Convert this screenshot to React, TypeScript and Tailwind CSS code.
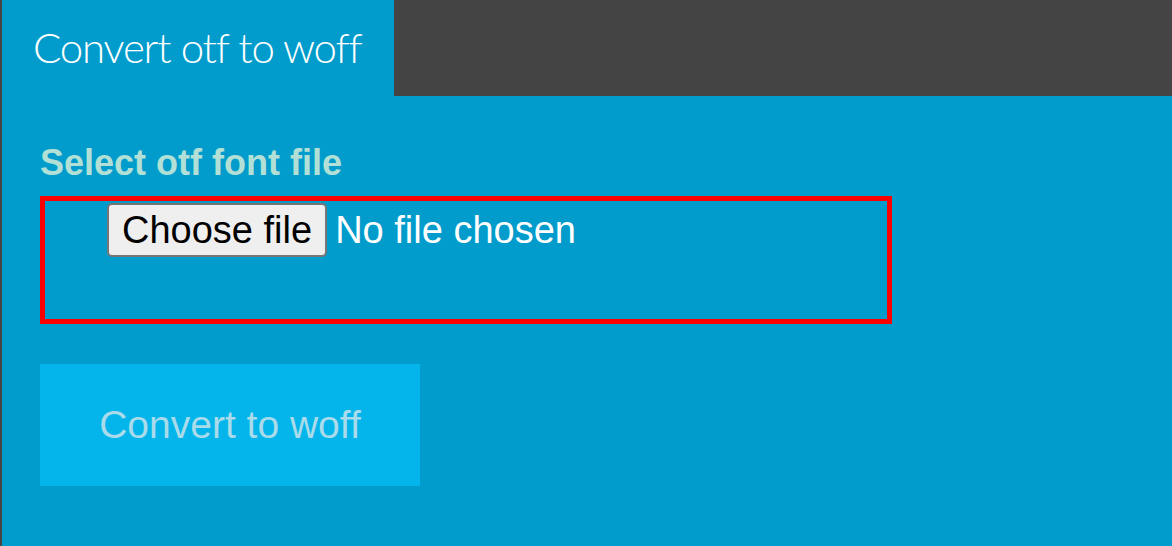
import React from "react";

const App: React.FC = () => {
  return (
    <div className="flex h-[546px] w-full flex-col bg-[#444444] pl-[2px]">
      <div className="flex h-[96px] shrink-0">
        <div className="flex w-[392px] items-center bg-[#019ccb] pl-[31px] pb-[2px]">
          <h1 className="font-['Lato','Open_Sans',sans-serif] text-[42px] font-light leading-none tracking-[-1.2px] text-white">
            Convert otf to woff
          </h1>
        </div>
      </div>

      <div className="flex flex-1 flex-col items-start bg-[#019ccb] pl-[38px] pt-[46px] font-['Liberation_Sans',Arial,sans-serif]">
        <label
          htmlFor="font-file"
          className="text-[36px] font-bold leading-[41px] text-[#b2e0d6]"
        >
          Select otf font file
        </label>

        <div className="mt-[13px] h-[128px] w-[852px] border-[5px] border-[#ff0000] pl-[62px] pt-[2px]">
          <label className="flex cursor-pointer items-start gap-[8px]">
            <input id="font-file" type="file" accept=".otf" className="hidden" />
            <span className="flex h-[54px] items-center rounded-[5px] border-2 border-[#767676] bg-[#efefef] px-[13px] text-[38px] text-black">
              Choose file
            </span>
            <span className="text-[38px] leading-[54px] text-white">No file chosen</span>
          </label>
        </div>

        <button
          type="button"
          className="mt-[40px] flex h-[122px] w-[380px] items-center justify-center bg-[#03b5ea] text-[39px] text-[#a9dbea]"
        >
          Convert to woff
        </button>
      </div>
    </div>
  );
};

export default App;
